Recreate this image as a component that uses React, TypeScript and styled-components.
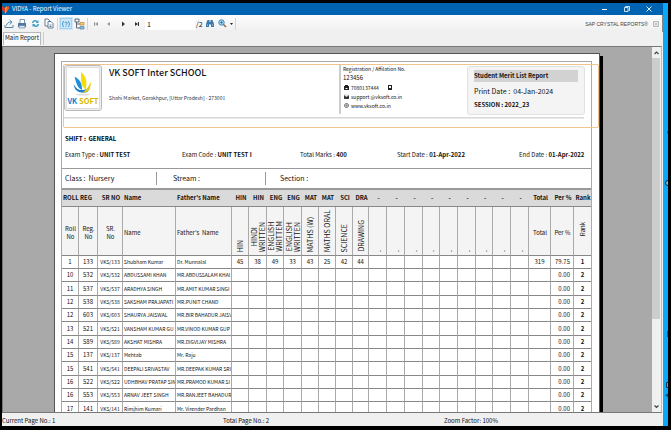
import React from "react";
import styled, { createGlobalStyle, css } from "styled-components";

const sans = '"Noto Sans CJK SC", "Open Sans", sans-serif';

const GlobalStyle = createGlobalStyle`
  * { box-sizing: border-box; }
  html, body, #root { height: 100%; margin: 0; }
  body { background: #000; overflow: hidden; font: 6px/10px ${sans}; color: #111; }
  button, input { font: inherit; color: inherit; border: 0; padding: 0; background: none; }
  svg { display: block; }
`;

const Desktop = styled.div`
  height: 100%;
  display: flex;
  padding: 3px 3px 4px 2px;
`;

const DesktopEdge = styled.div`
  position: relative;
  width: 5px;
  background: #0aa8f8;
  overflow: hidden;
`;

const DesktopIcon = styled.svg<{ $top: number }>`
  position: absolute;
  left: 1px;
  top: ${(p) => p.$top}px;
`;

const Window = styled.div`
  flex: 1;
  min-width: 0;
  display: flex;
  flex-direction: column;
  background: #f0f0f0;
`;

const TitleBar = styled.header`
  height: 12px;
  display: flex;
  align-items: center;
  gap: 2px;
  background: #0063b1;
  color: #fff;
  padding-right: 4px;
`;

const WindowTitle = styled.h1`
  flex: 1;
  margin: 0;
  font: 6px/10px ${sans};
`;

const CaptionButton = styled.button`
  width: 20px;
  height: 10px;
  display: grid;
  place-items: center;
`;

const Toolbar = styled.div`
  height: 17px;
  display: flex;
  align-items: center;
  background: linear-gradient(#fdfdfd, #efefef);
  padding-right: 3px;
  border-right: 1px solid #888;
`;

const ToolButton = styled.button<{ $active?: boolean; $width?: number }>`
  width: ${(p) => p.$width ?? 14}px;
  height: 13px;
  display: grid;
  place-items: center;
  ${(p) =>
    p.$active &&
    css`
      background: #cfe8f9;
      outline: 1px solid #a3d0f0;
      outline-offset: -2px;
    `}
`;

const ToolSeparator = styled.div`
  width: 1px;
  height: 12px;
  margin: 0 1px;
  background: #d4d4d4;
`;

const PageField = styled.label`
  display: flex;
  align-items: center;
  margin-left: 2px;
  font-size: 7px;

  input {
    width: 50px;
    height: 13px;
    padding-left: 2px;
    margin-right: 1px;
    background: #fff;
  }
`;

const Brand = styled.div`
  margin-left: auto;
  display: flex;
  align-items: center;
  gap: 5px;
  font: 5px/10px "Liberation Sans", sans-serif;
  color: #444;
`;

const Tabs = styled.div`
  height: 14px;
  display: flex;
  align-items: flex-start;
  padding-left: 1px;
`;

const Tab = styled.button`
  height: 13px;
  padding: 0 1px 2px;
  border: 1px solid #b8b8b8;
  border-bottom: 0;
  background: #fafafa;
`;

const TabEnd = styled.div`
  width: 1px;
  height: 13px;
  margin-left: 2px;
  background: #ccc;
`;

const Viewer = styled.main`
  flex: 1;
  min-height: 0;
  display: flex;
  border: 1px solid #777;
  border-right-color: #bbb;
  margin-right: 1px;
`;

const Canvas = styled.div`
  flex: 1;
  min-width: 0;
  overflow: hidden;
  background: #a9a9a9;
  padding: 6px 52px 0 51px;
`;

const Paper = styled.article`
  background: #fff;
  border: 1px solid #555;
  box-shadow: 3px 3px 0 #000;
  padding: 7px 7px 0 6px;
`;

const Frame = styled.div`
  border: 1px solid #aaa;
`;

const ScrollTrack = styled.div`
  width: 9px;
  display: flex;
  flex-direction: column;
  background: #f0f0f0;
`;

const ScrollButton = styled.button`
  height: 11px;
  display: grid;
  place-items: center;
`;

const ScrollThumb = styled.div`
  width: 8px;
  flex: 76;
  background: #cdcdcd;
`;

const ScrollRest = styled.div`
  flex: 24;
`;

const SchoolHeader = styled.header`
  margin: 2px -8px 0 1px;
  border: 1px solid #efc48d;
  border-radius: 2px;
  padding-bottom: 8px;
`;

const HeaderRow = styled.div`
  display: grid;
  grid-template-columns: 38px 237fr 128fr 118fr 12px;
  height: 52px;
  margin-right: 1px;
`;

const HeaderShadow = styled.div`
  height: 2px;
  margin-right: 14px;
  background: linear-gradient(#cfcfcf, #f2f2f2);
`;

const LogoBox = styled.div`
  height: 46px;
  border: 1px solid #bbb;
  border-radius: 3px;
  padding: 1px;
  background: #eee;

  svg {
    width: 100%;
    height: 100%;
    background: #fff;
    border: 1px solid #ddd;
    border-radius: 2px;
  }
`;

const School = styled.div`
  padding: 2px 0 0 7px;
`;

const SchoolName = styled.h2`
  margin: 0 0 14px;
  font: 500 9px/12px ${sans};
  color: #111;
`;

const SchoolAddress = styled.p`
  margin: 0;
  font-size: 5px;
  color: #333;
`;

const Contacts = styled.div`
  height: 49px;
  border-left: 2px solid #ccc;
  padding-left: 2px;
  font-size: 5px;
`;

const ContactHeading = styled.div`
  line-height: 8px;
`;

const ContactNumber = styled.div`
  font-size: 6px;
  line-height: 9px;
  margin-bottom: 1px;
`;

const ContactLine = styled.div`
  display: flex;
  align-items: center;
  gap: 2px;
  padding-left: 1px;
  line-height: 9px;

  a { color: inherit; text-decoration: none; }
  a + svg { margin-left: 6px; }
`;

const ReportCard = styled.section`
  height: 49px;
  margin-top: 1px;
  padding: 3px 6px;
  border: 1px solid #dde2e6;
  border-radius: 3px;
  background: #f4f4f4;
  line-height: 13px;
`;

const ReportTitle = styled.h3`
  margin: 0 0 3px;
  background: #d2d2d2;
  font: bold 6px/12px ${sans};
`;

const PrintDate = styled.div`
  font-size: 7px;
`;

const Shift = styled.div`
  padding: 5px 3px 0;
  font: bold 6px/12px ${sans};
  color: #000;
`;

const ExamRow = styled.div`
  display: grid;
  grid-template-columns: 117fr 118fr 97fr 122fr 72fr;
  padding: 5px 0 8px 3px;
  white-space: nowrap;
`;

const ClassRow = styled.div`
  display: grid;
  grid-template-columns: 95fr 109fr 325fr;
  align-items: center;
  border-top: 1px solid #999;
  padding: 3px 0;
`;

const ClassCell = styled.div<{ $indent: number; $ruled?: boolean }>`
  padding-left: ${(p) => p.$indent}px;
  border-right: ${(p) => (p.$ruled ? "1px solid #999" : "0")};
  font-size: 7px;
  line-height: 13px;
`;

const Table = styled.table`
  width: 100%;
  table-layout: fixed;
  border-collapse: separate;
  border-spacing: 0;
  border-top: 2px solid #999;
`;

const CodeCell = styled.th<{ $left?: boolean }>`
  height: 17px;
  padding: 0 0 0 1px;
  background: #dadada;
  border-bottom: 1px solid #888;
  font-size: 6px;
  text-align: ${(p) => (p.$left ? "left" : "center")};
  white-space: nowrap;
`;

const LabelCell = styled.th<{ $left?: boolean }>`
  height: 49px;
  padding: 4px 0 0 1px;
  background: #f4f4f4;
  border-right: 1px solid #aaa;
  border-bottom: 1px solid #888;
  font-size: 6px;
  font-weight: normal;
  line-height: 8px;
  text-align: ${(p) => (p.$left ? "left" : "center")};

  &:last-child { border-right: 0; }
`;

const VerticalLabel = styled.th<{ $middle?: boolean }>`
  height: 49px;
  padding: 0 0 3px;
  background: #f4f4f4;
  border-right: 1px solid #aaa;
  border-bottom: 1px solid #888;
  vertical-align: ${(p) => (p.$middle ? "middle" : "bottom")};

  span {
    display: block;
    margin: 0 auto;
    writing-mode: vertical-rl;
    transform: rotate(180deg);
    font: ${(p) => (p.$middle ? 6 : 7)}px/8px ${sans};
    white-space: pre;
  }
  &:last-child { border-right: 0; }
`;

const Row = styled.tr`
  td { height: 13px; }
  &:nth-child(3n) td { height: 14px; }
`;

const Cell = styled.td<{ $align?: "right"; $bold?: boolean; $small?: boolean }>`
  padding: 0 ${(p) => (p.$align === "right" ? 3 : 0)}px 0 0;
  border-right: 1px solid #aaa;
  border-bottom: 1px solid #888;
  white-space: nowrap;
  text-align: ${(p) => p.$align ?? "center"};
  font-weight: ${(p) => (p.$bold ? "bold" : "normal")};
  font-size: ${(p) => (p.$small ? 5 : 6)}px;

  &:last-child { border-right: 0; }
`;

const NameCell = styled(Cell)`
  padding: 0 0 0 1px;
  overflow: hidden;
  text-align: left;
`;

const StatusBar = styled.footer`
  height: 13px;
  display: grid;
  grid-template-columns: 221fr 221fr 219fr;
  padding-top: 3px;
`;

const columnWidths = [
  17, 19, 25, 53, 56, 17, 18, 17, 18, 17, 17, 17, 16, 18, 18, 18, 17, 18, 18, 17, 18, 18, 22, 23, 17,
];
const subjects = [
  ["HIN", "HIN", "45"],
  ["HIN", "HINDI\nWRITTEN", "38"],
  ["ENG", "ENGLISH\nWRITTEM", "49"],
  ["ENG", "ENGLISH\nWRITTEN", "33"],
  ["MAT", "MATHS (W)", "43"],
  ["MAT", "MATHS ORAL", "25"],
  ["SCI", "SCIENCE", "42"],
  ["DRA", "DRAWING", "44"],
  ...Array.from({ length: 9 }, () => ["-", ".", ""]),
];
const students = [
  ["1", "133", "Shubham Kumar", "Dr. Munnalal"],
  ["10", "532", "ABDUSSAMI KHAN", "MR.ABDUSSALAM KHAI"],
  ["11", "537", "ARADHYA SINGH", "MR.AMIT KUMAR SINGI"],
  ["12", "538", "SAKSHAM PRAJAPATI", "MR.PUNIT CHAND"],
  ["12", "603", "SHAURYA JAISWAL", "MR.BIR BAHADUR JAISV"],
  ["13", "521", "VANSHAM KUMAR GU", "MR.VINOD KUMAR GUP"],
  ["14", "589", "AKSHAT MISHRA", "MR.DIGVIJAY MISHRA"],
  ["15", "137", "Mehtab", "Mr. Raju"],
  ["15", "541", "DEEPALI SRIVASTAV", "MR.DEEPAK KUMAR SRI"],
  ["16", "522", "UDHBHAV PRATAP SIN", "MR.PRAMOD KUMAR SI"],
  ["16", "553", "ARNAV JEET SINGH", "MR.RANJEET BAHADUR"],
  ["17", "141", "Rimjhim Kumari", "Mr. Virender Pardhan"],
];

const AppIcon = () => (
  <svg width="8" height="9" viewBox="0 0 8 9">
    <path d="M0 1l3 2v5L0 5z" fill="#d9362b" />
    <path d="M3 3l2-2 1 4-3 4z" fill="#f6a51c" />
    <path d="M5 2l2-1v3L4 7z" fill="#e8582c" />
  </svg>
);
const ExportIcon = () => (
  <svg width="10" height="10" viewBox="0 0 10 10" fill="none" stroke="#5c86a0">
    <path d="M1 6v2.500h8V6" />
    <path d="M2.500 6.500C3 4 4.500 3 7 3M5.500 1L8 3 6 5.500" stroke="#4a90b8" />
  </svg>
);
const PrintIcon = () => (
  <svg width="10" height="10" viewBox="0 0 10 10">
    <path d="M3 .5h4.500v4H3z" fill="#fff" stroke="#7a96b5" />
    <path d="M1 4h8v4H1z" fill="#54789f" />
    <path d="M2 6.500h6v2.500H2z" fill="#d8e6f2" stroke="#54789f" strokeWidth=".6" />
  </svg>
);
const RefreshIcon = () => (
  <svg width="9" height="9" viewBox="0 0 9 9" fill="none" stroke="#3aa0c4" strokeWidth="1.400">
    <path d="M1.500 4C2 1.500 5 1 6.500 3M7.500 5C7 7.500 4 8 2.500 6" />
    <path d="M7.500 1v3H4.800zM1.500 8V5h2.700z" fill="#3aa0c4" stroke="none" />
  </svg>
);
const CopyIcon = () => (
  <svg width="10" height="11" viewBox="0 0 10 11" fill="#fff" stroke="#56708a" strokeWidth=".9">
    <path d="M1 1h3l2 2v5H1z" />
    <path d="M4 3.500h3l2 2V10H4z" />
    <path d="M5.500 7h2M5.500 8.500h2" />
  </svg>
);
const ParameterIcon = () => (
  <svg width="10" height="10" viewBox="0 0 10 10" fill="none" stroke="#3c8fc4" strokeWidth=".9">
    <path d="M2.500 2Q.5 5 2.500 8M7.500 2Q9.500 5 7.500 8M3.800 4Q4 3 5 3t1.200 1Q6.200 5 5 5.500v.8M5 7.200v.8" />
  </svg>
);
const TreeIcon = () => (
  <svg width="11" height="12" viewBox="0 0 11 12" fill="none">
    <path d="M2.500 3v7H6M2.500 6H6" stroke="#667" />
    <path d="M1 1h4v3H1z" fill="#fff" stroke="#567" />
    <path d="M6 4.500h4v2.500H6z" fill="#f7c873" stroke="#b88a3a" strokeWidth=".7" />
    <path d="M6 8.500h4V11H6z" fill="#8fc1e8" stroke="#4c7ba5" strokeWidth=".7" />
  </svg>
);
const NavIcon = ({ path, color }: { path: string; color: string }) => (
  <svg width="6" height="6" viewBox="0 0 6 6">
    <path d={path} fill={color} />
  </svg>
);
const BinocularsIcon = () => (
  <svg width="8" height="9" viewBox="0 0 8 9" fill="#3a78ad">
    <path d="M1.500 1h2v2h1V1h2L8 5v3H5V5.500H3V8H0V5z" />
    <path d="M1 6h1M6 6h1" stroke="#b9dcf4" />
  </svg>
);
const ZoomIcon = () => (
  <svg width="9" height="9" viewBox="0 0 9 9" fill="none">
    <circle cx="3.500" cy="3.500" r="2.700" fill="#a9d8f4" stroke="#3f86ba" />
    <path d="M2.300 3.500h2.400M3.500 2.300v2.400" stroke="#1f6499" strokeWidth=".8" />
    <path d="M5.500 5.500L8 8" stroke="#8a6a4a" strokeWidth="1.500" />
  </svg>
);
const CloseViewIcon = () => (
  <svg width="6" height="6" viewBox="0 0 6 6" fill="none" stroke="#aaa" strokeWidth=".8">
    <path d="M.5.5h5v5h-5zM1.500 1.500l3 3M4.500 1.500l-3 3" />
  </svg>
);
const Chevron = ({ down }: { down?: boolean }) => (
  <svg width="5" height="4" viewBox="0 0 5 4" fill="none" stroke="#444" strokeWidth="1.200">
    <path d={down ? "M.5.5l2 2 2-2" : "M.5 3l2-2 2 2"} />
  </svg>
);
const Logo = () => (
  <svg viewBox="0 0 34 42" role="img" aria-label="VK SOFT">
    <path d="M8 9c6 3 8 7 8 14C11 21 10 16 8 9z" fill="#1b8fdc" />
    <path d="M7 17c1 6 4 9 11 9 4 0 7-3 6-9-1 4-3 6-7 6-4 1-7-1-10-6z" fill="#1a7fce" />
    <path d="M15 4c7 6 6 12 5 19-6-5-5-10-5-19z" fill="#f5dc0a" />
    <path d="M25 14c1 7-2 12-9 12 3-2 7-5 9-12z" fill="#e8cf08" />
    <ellipse cx="17" cy="28" rx="8" ry="1" fill="#ddd" />
    <text x="17" y="38" textAnchor="middle" fontFamily="Noto Sans CJK SC, Open Sans, sans-serif" fontWeight="bold" fontSize="8" fill="#1482d2">
      VK <tspan fill="#d8b800">SOFT</tspan>
    </text>
  </svg>
);
const ContactIcon = ({ kind }: { kind: "phone" | "mail" | "web" | "mobile" }) => (
  <svg width="5" height="5" viewBox="0 0 5 5" fill="#222">
    {kind === "phone" && <path d="M1 0h3v1h1v4H0V1h1zM1.500 3h2v1h-2z" fillRule="evenodd" />}
    {kind === "mail" && <path d="M0 1h5v4H0zM0 1l2.500 2L5 1" stroke="#999" strokeWidth=".4" />}
    {kind === "web" && (
      <g fill="none" stroke="#333" strokeWidth=".7">
        <circle cx="2.500" cy="2.500" r="2" />
        <circle cx="2.500" cy="2.500" r=".6" />
      </g>
    )}
    {kind === "mobile" && <path d="M1 0h4v5H1zM2 1v2h2V1z" fillRule="evenodd" />}
  </svg>
);

export default function App() {
  return (
    <>
      <GlobalStyle />
      <Desktop>
        <Window>
          <TitleBar>
            <AppIcon />
            <WindowTitle>VIDYA - Report Viewer</WindowTitle>
            <CaptionButton aria-label="Minimize">
              <svg width="6" height="6" stroke="#fff"><path d="M0 3.500h5" /></svg>
            </CaptionButton>
            <CaptionButton aria-label="Restore">
              <svg width="6" height="6" fill="none" stroke="#fff" strokeWidth=".8"><path d="M.5 1.500h3.500v4H.5zM1.500 1V.5h4v4H4.500" /></svg>
            </CaptionButton>
            <CaptionButton aria-label="Close">
              <svg width="6" height="6" stroke="#fff" strokeWidth=".9"><path d="M.5.5l5 5M5.500.5l-5 5" /></svg>
            </CaptionButton>
          </TitleBar>
          <Toolbar>
            <ToolButton aria-label="Export" $width={13}><ExportIcon /></ToolButton>
            <ToolButton aria-label="Print"><PrintIcon /></ToolButton>
            <ToolButton aria-label="Refresh" $width={13}><RefreshIcon /></ToolButton>
            <ToolButton aria-label="Copy"><CopyIcon /></ToolButton>
            <ToolSeparator />
            <ToolButton aria-label="Parameters" $active><ParameterIcon /></ToolButton>
            <ToolButton aria-label="Group tree" $width={13}><TreeIcon /></ToolButton>
            <ToolSeparator />
            <ToolButton aria-label="First page" $width={13}><NavIcon color="#999" path="M1 1h1v4H1zM5 1v4L2 3z" /></ToolButton>
            <ToolButton aria-label="Previous page"><NavIcon color="#999" path="M4 1v4L1 3z" /></ToolButton>
            <ToolButton aria-label="Next page"><NavIcon color="#333" path="M2 .5v5L5 3z" /></ToolButton>
            <ToolButton aria-label="Last page" $width={13}><NavIcon color="#333" path="M1 1v4l3-2zM4 1h1v4H4z" /></ToolButton>
            <PageField>
              <input aria-label="Page number" defaultValue="1" />
              <span>/2</span>
            </PageField>
            <ToolButton aria-label="Find"><BinocularsIcon /></ToolButton>
            <ToolButton aria-label="Zoom" $width={12}><ZoomIcon /></ToolButton>
            <ToolButton aria-label="Zoom options" $width={5}>
              <svg width="3" height="2"><path d="M0 0h3L1.500 2z" fill="#222" /></svg>
            </ToolButton>
            <ToolSeparator />
            <Brand>
              <span>SAP CRYSTAL REPORTS®</span>
              <CloseViewIcon />
            </Brand>
          </Toolbar>
          <Tabs role="tablist">
            <Tab role="tab" aria-selected="true">Main Report</Tab>
            <TabEnd />
          </Tabs>
          <Viewer>
            <Canvas>
              <Paper>
                <Frame>
                  <SchoolHeader>
                    <HeaderRow>
                      <LogoBox><Logo /></LogoBox>
                      <School>
                        <SchoolName>VK SOFT Inter SCHOOL</SchoolName>
                        <SchoolAddress>Shahi Market, Gorakhpur, [Uttar Pradesh] - 273001</SchoolAddress>
                      </School>
                      <Contacts>
                        <ContactHeading>Registration / Affilation No.</ContactHeading>
                        <ContactNumber>123456</ContactNumber>
                        <ContactLine><ContactIcon kind="phone" /><a href="tel:7080137444">7080137444</a><ContactIcon kind="mobile" /></ContactLine>
                        <ContactLine><ContactIcon kind="mail" /><a href="mailto:support@vksoft.co.in">support @vksoft.co.in</a></ContactLine>
                        <ContactLine><ContactIcon kind="web" /><a href="#site">www.vksoft.co.in</a></ContactLine>
                      </Contacts>
                      <ReportCard>
                        <ReportTitle>Student Merit List Report</ReportTitle>
                        <PrintDate>Print Date :&nbsp; 04-Jan-2024</PrintDate>
                        <b>SESSION : 2022_23</b>
                      </ReportCard>
                    </HeaderRow>
                    <HeaderShadow />
                  </SchoolHeader>
                  <Shift>SHIFT :&nbsp; GENERAL</Shift>
                  <ExamRow>
                    <span>Exam Type : <b>UNIT TEST</b></span>
                    <span>Exam Code : <b>UNIT TEST I</b></span>
                    <span>Total Marks : <b>400</b></span>
                    <span>Start Date : <b>01-Apr-2022</b></span>
                    <span>End Date : <b>01-Apr-2022</b></span>
                  </ExamRow>
                  <ClassRow>
                    <ClassCell $indent={3} $ruled>Class :&nbsp; Nursery</ClassCell>
                    <ClassCell $indent={16} $ruled>Stream :</ClassCell>
                    <ClassCell $indent={14}>Section :</ClassCell>
                  </ClassRow>
                  <Table>
                    <colgroup>
                      {columnWidths.map((w, i) => <col key={i} width={w} />)}
                    </colgroup>
                    <thead>
                      <tr>
                        <CodeCell $left>ROLL</CodeCell>
                        <CodeCell $left>REG</CodeCell>
                        <CodeCell>SR NO</CodeCell>
                        <CodeCell $left>Name</CodeCell>
                        <CodeCell $left>Father's Name</CodeCell>
                        {subjects.map(([code], i) => <CodeCell key={i}>{code}</CodeCell>)}
                        <CodeCell>Total</CodeCell>
                        <CodeCell>Per %</CodeCell>
                        <CodeCell>Rank</CodeCell>
                      </tr>
                      <tr>
                        <LabelCell>Roll<br />No</LabelCell>
                        <LabelCell>Reg.<br />No</LabelCell>
                        <LabelCell>SR.<br />No</LabelCell>
                        <LabelCell $left>Name</LabelCell>
                        <LabelCell $left>Father's&nbsp; Name</LabelCell>
                        {subjects.map(([, label], i) => <VerticalLabel key={i}><span>{label}</span></VerticalLabel>)}
                        <LabelCell>Total</LabelCell>
                        <LabelCell>Per %</LabelCell>
                        <VerticalLabel $middle><span>Rank</span></VerticalLabel>
                      </tr>
                    </thead>
                    <tbody>
                      {students.map(([roll, reg, name, father], r) => (
                        <Row key={reg}>
                          <Cell>{roll}</Cell>
                          <Cell>{reg}</Cell>
                          <Cell $small>VKS/{reg}</Cell>
                          <NameCell $small>{name}</NameCell>
                          <NameCell $small>{father}</NameCell>
                          {subjects.map(([, , mark], i) => <Cell key={i}>{r === 0 ? mark : ""}</Cell>)}
                          <Cell>{r === 0 ? "319" : ""}</Cell>
                          <Cell $align="right">{r === 0 ? "79.75" : "0.00"}</Cell>
                          <Cell $bold>{r === 0 ? "1" : "2"}</Cell>
                        </Row>
                      ))}
                    </tbody>
                  </Table>
                </Frame>
              </Paper>
            </Canvas>
            <ScrollTrack>
              <ScrollButton aria-label="Scroll up"><Chevron /></ScrollButton>
              <ScrollThumb />
              <ScrollRest />
              <ScrollButton aria-label="Scroll down"><Chevron down /></ScrollButton>
            </ScrollTrack>
          </Viewer>
          <StatusBar>
            <span>Current Page No.: 1</span>
            <span>Total Page No.: 2</span>
            <span>Zoom Factor: 100%</span>
          </StatusBar>
        </Window>
        <DesktopEdge>
          <DesktopIcon $top={126} width="5" height="8"><path d="M5 0Q2 3 5 7" fill="#136" /></DesktopIcon>
          <DesktopIcon $top={176} width="5" height="8"><circle cx="4" cy="4" r="2.500" fill="#7cc" stroke="#024" /></DesktopIcon>
          <DesktopIcon $top={327} width="5" height="8"><path d="M3 1h2v6H3z" fill="#257" /></DesktopIcon>
          <DesktopIcon $top={378} width="5" height="8"><path d="M2.500 1.500H5v5H2.500z" fill="#5ad" stroke="#135" /></DesktopIcon>
          <DesktopIcon $top={388} width="5" height="8"><path d="M1 4l4-2v5z" fill="#246" /></DesktopIcon>
        </DesktopEdge>
      </Desktop>
    </>
  );
}
